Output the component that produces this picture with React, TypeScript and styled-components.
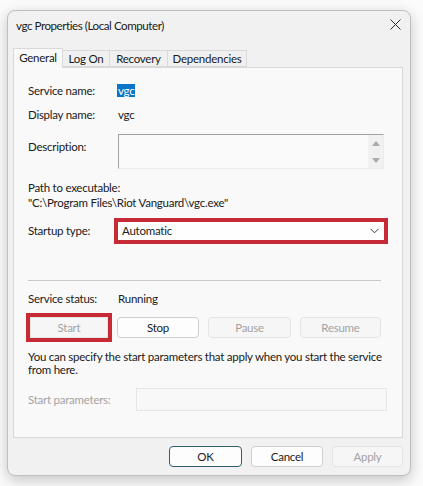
import React from 'react';
import styled, { createGlobalStyle } from 'styled-components';

const GlobalStyle = createGlobalStyle`
  html, body {
    margin: 0;
    padding: 0;
    background: #fbfbfb;
  }
  body {
    font-family: Lato, "Liberation Sans", sans-serif;
    font-size: 11.5px;
    letter-spacing: -0.25px;
    color: #202020;
  }
`;

const Page = styled.div`
  padding: 10px 0 0 7px;
  width: 423px;
  height: 486px;
  box-sizing: border-box;
`;

const Window = styled.div`
  width: 404px;
  height: 466px;
  box-sizing: border-box;
  border: 1px solid #bfbfbf;
  border-radius: 8px;
  background: #f1f1f1;
  box-shadow: 0 4px 14px rgba(0, 0, 0, 0.22);
  display: flex;
  flex-direction: column;
`;

const TitleBar = styled.div`
  height: 28px;
  padding: 0 9px 0 8px;
  display: flex;
  align-items: center;
  justify-content: space-between;
`;

const Title = styled.div`
  font-size: 11.6px;
  letter-spacing: -0.45px;
  color: #1a1a1a;
`;

const CloseIcon = styled.svg`
  width: 11px;
  height: 11px;
  margin-top: -1px;
`;

const TabStrip = styled.div`
  margin: 9px 7px 0 5px;
  display: flex;
  align-items: flex-end;
  height: 19px;
  position: relative;
  z-index: 1;
`;

const Tab = styled.div<{ $active?: boolean; $w: number }>`
  box-sizing: border-box;
  width: ${p => p.$w}px;
  height: ${p => (p.$active ? '20px' : '17px')};
  margin-bottom: ${p => (p.$active ? '-1px' : '0')};
  border: 1px solid #d9d9d9;
  border-bottom: ${p => (p.$active ? '1px solid #f9f9f9' : '1px solid #d9d9d9')};
  border-left: ${p => (p.$active ? '1px solid #d9d9d9' : 'none')};
  background: ${p => (p.$active ? '#f9f9f9' : '#f0f0f0')};
  display: flex;
  align-items: center;
  justify-content: center;
  padding-bottom: ${p => (p.$active ? '1px' : '0')};
  color: #1a1a1a;
`;

const Panel = styled.div`
  margin: 0 7px 0 5px;
  height: 371px;
  box-sizing: border-box;
  background: #f9f9f9;
  border: 1px solid #d9d9d9;
  padding: 15px 18px 0 14px;
  display: flex;
  flex-direction: column;
`;

const Row = styled.div<{ $top?: number }>`
  display: grid;
  grid-template-columns: 90px 1fr;
  align-items: center;
  margin-top: ${p => p.$top ?? 0}px;
  line-height: 16px;
`;

const Label = styled.div<{ $disabled?: boolean }>`
  color: ${p => (p.$disabled ? '#a3a3a3' : '#202020')};
  white-space: nowrap;
`;

const Value = styled.div`
  color: #202020;
`;

const Selected = styled.span`
  background: #0a74c9;
  color: #fff;
  padding: 0 1px;
  margin-left: -1px;
`;

const TopRow = styled(Row)`
  align-items: start;
`;

const DescLabel = styled(Label)`
  padding-top: 5px;
`;

const TextArea = styled.div`
  height: 35px;
  box-sizing: border-box;
  border-top: 1px solid #a2a2a2;
  border-left: 1px solid #a2a2a2;
  border-right: 1px solid #ececec;
  border-bottom: 1px solid #ececec;
  background: #fafafa;
  display: flex;
  justify-content: flex-end;
`;

const ScrollTrack = styled.div`
  width: 15px;
  background: #f1f1f1;
  display: flex;
  flex-direction: column;
  justify-content: space-between;
  align-items: center;
  padding: 6px 0 5px;
  box-sizing: border-box;
`;

const Arrow = styled.div<{ $down?: boolean }>`
  width: 0;
  height: 0;
  border-left: 4px solid transparent;
  border-right: 4px solid transparent;
  ${p => (p.$down ? 'border-top: 5px solid #ababab;' : 'border-bottom: 5px solid #ababab;')}
`;

const PathBlock = styled.div`
  margin-top: 11px;
  line-height: 15px;
`;

const Combo = styled.div`
  height: 18px;
  background: #fefefe;
  outline: 4px solid #c62a35;
  display: flex;
  align-items: center;
  justify-content: space-between;
  padding: 0 5px 0 4px;
`;

const Chevron = styled.svg`
  width: 9px;
  height: 6px;
`;

const Separator = styled.div`
  margin-top: 40px;
  height: 1px;
  background: #c9c9c9;
  width: 353px;
`;

const ButtonRow = styled.div`
  margin-top: 10px;
  padding-left: 2px;
  display: flex;
  gap: 9px;
`;

const Button = styled.div<{ $w: number; $disabled?: boolean; $marked?: boolean; $default?: boolean }>`
  width: ${p => p.$w}px;
  height: 21px;
  box-sizing: border-box;
  border-radius: 4px;
  border: 1px solid ${p => (p.$default ? '#2f5f6f' : p.$disabled ? '#e4e4e4' : '#cfcfcf')};
  background: ${p => (p.$disabled ? '#f6f6f6' : '#fdfdfd')};
  color: ${p => (p.$disabled ? '#a3a3a3' : '#202020')};
  display: flex;
  align-items: center;
  justify-content: center;
  ${p => (p.$marked ? 'outline: 4px solid #c62a35; border-radius: 0;' : '')}
`;

const Note = styled.div`
  margin-top: 12px;
  line-height: 13px;
  width: 356px;
`;

const ParamBox = styled.div`
  height: 23px;
  box-sizing: border-box;
  border: 1px solid #e6e6e6;
  background: #f8f8f8;
  margin-left: 18px;
  margin-right: -3px;
`;

const Footer = styled.div`
  display: flex;
  justify-content: flex-end;
  gap: 9px;
  padding: 8px 7px 0 0;
`;

const tabs = [
  { name: 'General', w: 50 },
  { name: 'Log On', w: 47 },
  { name: 'Recovery', w: 58 },
  { name: 'Dependencies', w: 79 },
];

const App: React.FC = () => {
  return (
    <>
      <GlobalStyle />
      <Page>
        <Window>
          <TitleBar>
            <Title>vgc Properties (Local Computer)</Title>
            <CloseIcon viewBox="0 0 11 11">
              <path d="M0.5 0.5 L10.5 10.5 M10.5 0.5 L0.5 10.5" stroke="#2b2b2b" strokeWidth="1" />
            </CloseIcon>
          </TitleBar>

          <TabStrip>
            {tabs.map((t, i) => (
              <Tab key={t.name} $active={i === 0} $w={t.w}>{t.name}</Tab>
            ))}
          </TabStrip>

          <Panel>
            <Row>
              <Label>Service name:</Label>
              <Value><Selected>vgc</Selected></Value>
            </Row>
            <Row $top={8}>
              <Label>Display name:</Label>
              <Value>vgc</Value>
            </Row>
            <TopRow $top={11}>
              <DescLabel>Description:</DescLabel>
              <TextArea>
                <ScrollTrack>
                  <Arrow />
                  <Arrow $down />
                </ScrollTrack>
              </TextArea>
            </TopRow>

            <PathBlock>
              <div>Path to executable:</div>
              <div>{'"C:\\Program Files\\Riot Vanguard\\vgc.exe"'}</div>
            </PathBlock>

            <Row $top={12}>
              <Label>Startup type:</Label>
              <Combo>
                <span>Automatic</span>
                <Chevron viewBox="0 0 9 6">
                  <path d="M0.5 0.8 L4.5 4.8 L8.5 0.8" fill="none" stroke="#3a3a3a" strokeWidth="1" />
                </Chevron>
              </Combo>
            </Row>

            <Separator />

            <Row $top={10}>
              <Label>Service status:</Label>
              <Value>Running</Value>
            </Row>

            <ButtonRow>
              <Button $w={78} $disabled $marked>Start</Button>
              <Button $w={82}>Stop</Button>
              <Button $w={83} $disabled>Pause</Button>
              <Button $w={81} $disabled>Resume</Button>
            </ButtonRow>

            <Note>
              You can specify the start parameters that apply when you start the service from here.
            </Note>

            <Row $top={12}>
              <Label $disabled>Start parameters:</Label>
              <ParamBox />
            </Row>
          </Panel>

          <Footer>
            <Button $w={73} $default>OK</Button>
            <Button $w={72}>Cancel</Button>
            <Button $w={71} $disabled>Apply</Button>
          </Footer>
        </Window>
      </Page>
    </>
  );
};

export default App;
